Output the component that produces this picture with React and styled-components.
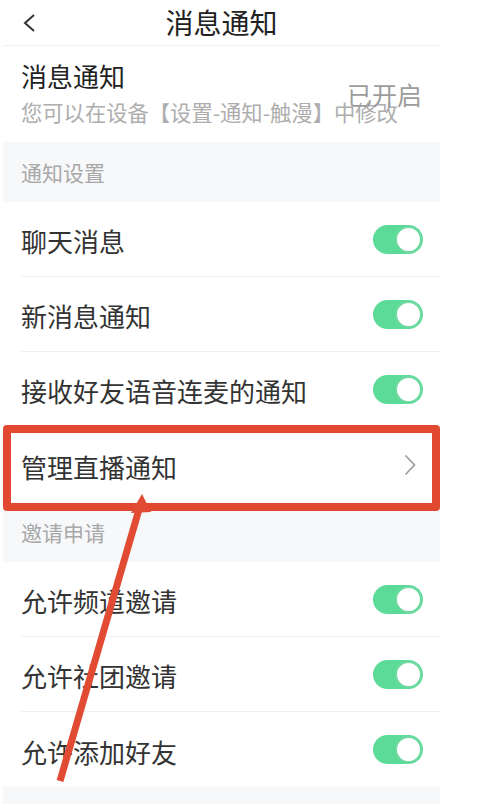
import styled, { createGlobalStyle } from "styled-components"

const GlobalStyle = createGlobalStyle`
    body {
        margin: 0;
        background: #ffffff;
        font-family: "Noto Sans CJK SC", "Noto Sans", sans-serif;
    }
`

const Screen = styled.div`
    position: relative;
    width: 437px;
    margin-left: 3px;
    min-height: 804px;
    background: #ffffff;
    overflow: hidden;
`

const Header = styled.div`
    display: grid;
    grid-template-columns: 1fr auto 1fr;
    align-items: center;
    height: 45px;
    border-bottom: 1px solid #f1f1f3;
`

const BackButton = styled.div`
    display: flex;
    align-items: center;
    padding-left: 19px;
    height: 100%;
`

const Title = styled.div`
    font-size: 28px;
    line-height: 45px;
    color: #222222;
    font-weight: 400;
`

const Summary = styled.div`
    display: flex;
    align-items: center;
    height: 96px;
    padding: 0 18px;
`

const SummaryText = styled.div`
    flex: 1;
    min-width: 0;
    display: flex;
    flex-direction: column;
    gap: 7px;
    margin-top: -3px;
`

const SummaryTitle = styled.div`
    font-size: 26px;
    line-height: 32px;
    color: #222222;
`

const SummaryHint = styled.div`
    font-size: 21.3px;
    line-height: 26px;
    color: #adadad;
    white-space: nowrap;
`

const Status = styled.div`
    flex-shrink: 0;
    font-size: 25px;
    color: #9c9c9c;
`

const SectionBand = styled.div`
    display: flex;
    align-items: center;
    height: ${props => props.$height || 60}px;
    padding-left: 18px;
    background: #f7f8fa;
    font-size: 21px;
    color: #a8a8a8;
`

const Row = styled.div`
    display: flex;
    height: 75px;
    padding-left: 18px;
`

const RowBody = styled.div`
    flex: 1;
    display: flex;
    align-items: center;
    justify-content: space-between;
    padding-right: ${props => props.$chevron ? 24 : 17}px;
    border-bottom: ${props => props.$last ? "none" : "1px solid #f1f1f3"};
`

const RowLabel = styled.div`
    font-size: 26px;
    color: #333333;
    margin-top: 3px;
`

const Toggle = styled.div`
    position: relative;
    width: 50px;
    height: 29px;
    border-radius: 15px;
    background: #5cdb98;
    flex-shrink: 0;
`

const Knob = styled.div`
    position: absolute;
    top: 1px;
    right: 1px;
    width: 23px;
    height: 23px;
    border-radius: 50%;
    background: #ffffff;
    border: 2px solid #6fd9a1;
`

const Highlight = styled.div`
    position: absolute;
    top: 425px;
    left: 0;
    width: 437px;
    height: 86px;
    box-sizing: border-box;
    border: 8px solid #e2482f;
    border-radius: 4px;
    pointer-events: none;
`

const Pointer = styled.svg`
    position: absolute;
    top: 0;
    left: -3px;
    pointer-events: none;
`

function Switch () {
    return (
        <Toggle>
            <Knob />
        </Toggle>
    )
}

function SettingRow ({label, last, chevron}) {
    return (
        <Row>
            <RowBody $last={last} $chevron={chevron}>
                <RowLabel>{label}</RowLabel>
                {chevron ? (
                    <svg width="12" height="22" viewBox="0 0 12 22">
                        <path d="M1.5 1.5 L10.5 11 L1.5 20.5" fill="none" stroke="#9a9a9a" strokeWidth="1.6" />
                    </svg>
                ) : <Switch />}
            </RowBody>
        </Row>
    )
}

export default function App () {
    return (
        <Screen>
            <GlobalStyle />
            <Header>
                <BackButton>
                    <svg width="14" height="20" viewBox="0 0 14 20">
                        <path d="M12 2 L3 10 L12 18" fill="none" stroke="#333333" strokeWidth="2" />
                    </svg>
                </BackButton>
                <Title>消息通知</Title>
                <div />
            </Header>

            <Summary>
                <SummaryText>
                    <SummaryTitle>消息通知</SummaryTitle>
                    <SummaryHint>您可以在设备【设置-通知-触漫】中修改</SummaryHint>
                </SummaryText>
                <Status>已开启</Status>
            </Summary>

            <SectionBand>通知设置</SectionBand>
            <SettingRow label="聊天消息" />
            <SettingRow label="新消息通知" />
            <SettingRow label="接收好友语音连麦的通知" />
            <SettingRow label="管理直播通知" chevron last />

            <SectionBand>邀请申请</SectionBand>
            <SettingRow label="允许频道邀请" />
            <SettingRow label="允许社团邀请" />
            <SettingRow label="允许添加好友" last />
            <SectionBand $height={20} />

            <Highlight />
            <Pointer width="494" height="804" viewBox="0 0 494 804">
                <line x1="60" y1="781" x2="140" y2="506" stroke="#e24b33" strokeWidth="7" />
                <polygon points="142,494 131,513 151,512" fill="#e24b33" />
            </Pointer>
        </Screen>
    )
}
